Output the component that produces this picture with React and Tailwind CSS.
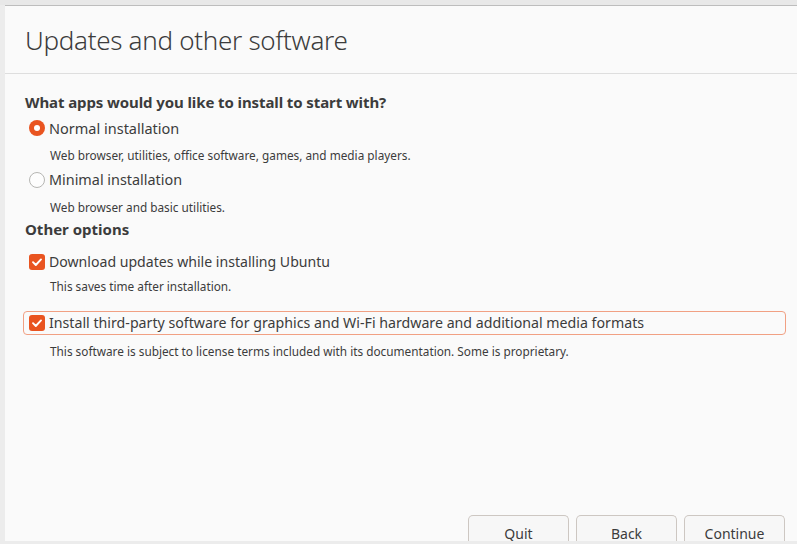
import React from "react";

const font = { fontFamily: '"Noto Sans", "Open Sans", sans-serif' };

function Radio({ checked }) {
  return checked ? (
    <span className="w-[16px] h-[16px] rounded-full bg-[#e95420] flex items-center justify-center shrink-0">
      <span className="w-[6px] h-[6px] rounded-full bg-white" />
    </span>
  ) : (
    <span className="w-[16px] h-[16px] rounded-full border border-[#b6b6b3] bg-[#fdfdfd] shrink-0" />
  );
}

function Check() {
  return (
    <span className="w-[16px] h-[16px] rounded-[3px] bg-[#e95420] flex items-center justify-center shrink-0">
      <svg width="12" height="12" viewBox="0 0 12 12" fill="none">
        <path d="M2 6.2 L4.8 9 L10 3.4" stroke="white" strokeWidth="1.9" strokeLinecap="round" strokeLinejoin="round" />
      </svg>
    </span>
  );
}

function Button({ children }) {
  return (
    <div className="w-[101px] h-[26px] border border-[#cdc7c2] border-b-0 rounded-t-[5px] bg-[#f7f7f7] flex justify-center pt-[11px] text-[14px] text-[#3c3c3c] leading-none">
      {children}
    </div>
  );
}

export default function App() {
  return (
    <div className="w-[797px] h-[544px] bg-[#ececec] flex flex-col overflow-hidden text-[#3c3c3c]" style={font}>
      <div className="h-[5px] bg-[#e8e8e8] shrink-0" />
      <div className="h-[1px] bg-[#bdbdbd] shrink-0 ml-[5px]" />
      <div className="flex-1 ml-[5px] bg-[#fafafa] flex flex-col min-h-0">
        <div className="h-[68px] border-b border-[#dedede] flex items-center pl-[20px] shrink-0">
          <h1 className="text-[26px] font-light tracking-[-0.3px] leading-none text-[#3c3c3c]">Updates and other software</h1>
        </div>
        <div className="flex-1 flex flex-col pl-[20px] pt-[19px]">
          <div className="text-[15px] font-bold leading-[18px] tracking-[-0.1px]">What apps would you like to install to start with?</div>
          <div className="flex items-center gap-[4px] mt-[8px] pl-[4px]">
            <Radio checked />
            <span className="text-[14.5px] leading-[18px]">Normal installation</span>
          </div>
          <div className="text-[11.8px] leading-[16px] pl-[25px] mt-[10px]">Web browser, utilities, office software, games, and media players.</div>
          <div className="flex items-center gap-[4px] mt-[8px] pl-[4px]">
            <Radio />
            <span className="text-[14.4px] leading-[18px]">Minimal installation</span>
          </div>
          <div className="text-[11.8px] leading-[16px] pl-[25px] mt-[10px]">Web browser and basic utilities.</div>
          <div className="text-[15px] font-bold leading-[18px] mt-[5px]">Other options</div>
          <div className="flex items-center gap-[4px] mt-[15px] pl-[4px]">
            <Check />
            <span className="text-[14.1px] leading-[18px]">Download updates while installing Ubuntu</span>
          </div>
          <div className="text-[11.8px] leading-[16px] pl-[25px] mt-[7px]">This saves time after installation.</div>
          <div className="flex items-center gap-[4px] mt-[17px] -ml-[2px] mr-[11px] h-[24px] border border-[#f1a083] rounded-[4px] pl-[5px]">
            <Check />
            <span className="text-[14.2px] leading-[18px]">Install third-party software for graphics and Wi-Fi hardware and additional media formats</span>
          </div>
          <div className="text-[11.8px] leading-[16px] pl-[25px] mt-[8px]">This software is subject to license terms included with its documentation. Some is proprietary.</div>
          <div className="flex-1" />
          <div className="flex justify-end gap-[7px] pr-[12px]">
            <Button>Quit</Button>
            <Button>Back</Button>
            <Button>Continue</Button>
          </div>
        </div>
      </div>
      <div className="h-[3px] bg-[#ececec] shrink-0" />
    </div>
  );
}
